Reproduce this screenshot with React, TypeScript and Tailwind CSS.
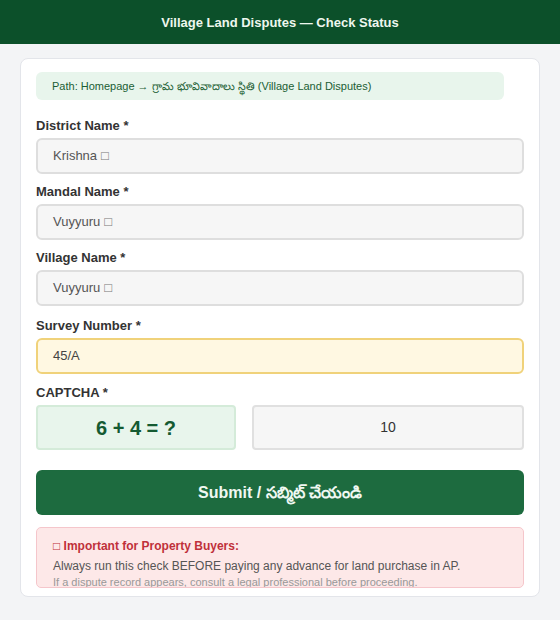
import React from "react";

const font = { fontFamily: '"Liberation Sans", Arial, sans-serif' };

function Label({ children }: { children: React.ReactNode }) {
  return <div className="text-[13px] font-bold text-[#333] leading-[14px] mb-[5px]">{children}</div>;
}

function Field({ label, value }: { label: string; value: string }) {
  return (
    <div className="flex flex-col">
      <Label>{label}</Label>
      <div className="h-[36px] rounded-[6px] border-2 border-[#dedede] bg-[#f6f6f6] px-[15px] flex items-center text-[13px] text-[#555]">
        {value} <span className="ml-[4px] text-[#777]">□</span>
      </div>
    </div>
  );
}

export default function App() {
  return (
    <div className="w-[560px] h-[620px] bg-[#f3f4f6] overflow-hidden" style={font}>
      <div className="h-[44px] bg-[#0c502a] flex items-center justify-center pt-[1px] text-[13px] font-bold text-[#eef7ee]">
        Village Land Disputes — Check Status
      </div>
      <div className="px-[20px] pt-[14px]">
        <div className="h-[539px] bg-white rounded-[8px] border border-[#e3e5ea] px-[15px] pt-[13px] overflow-hidden">
          <div className="w-[468px] h-[28px] rounded-[6px] bg-[#e8f5ec] pl-[16px] flex items-center text-[11px] text-[#1b5e34]">
            Path: Homepage → గ్రామ భూవివాదాలు స్థితి (Village Land Disputes)
          </div>
          <div className="mt-[19px] flex flex-col gap-[11px]">
            <Field label="District Name *" value="Krishna" />
            <Field label="Mandal Name *" value="Vuyyuru" />
            <Field label="Village Name *" value="Vuyyuru" />
          </div>
          <div className="mt-[13px] flex flex-col">
            <Label>Survey Number *</Label>
            <div className="h-[36px] rounded-[6px] border-2 border-[#f0d27a] bg-[#fff8e2] px-[15px] flex items-center text-[13px] text-[#444]">
              45/A
            </div>
          </div>
          <div className="mt-[12px] flex flex-col">
            <Label>CAPTCHA *</Label>
            <div className="flex gap-[16px]">
              <div className="w-[200px] h-[45px] rounded-[4px] border-2 border-[#d4ebd9] bg-[#e8f5ec] flex items-center justify-center text-[20px] font-bold text-[#145a32]">
                6 + 4 = ?
              </div>
              <div className="flex-1 h-[45px] rounded-[4px] border-2 border-[#e0e0e0] bg-[#f6f6f6] flex items-center justify-center text-[14px] text-[#333]">
                10
              </div>
            </div>
          </div>
          <div className="mt-[20px] h-[45px] rounded-[6px] bg-[#1d6b3f] flex items-center justify-center text-[16px] font-bold text-[#f0f8f2]">
            Submit / సబ్మిట్ చేయండి
          </div>
          <div className="mt-[12px] h-[61px] rounded-[5px] border border-[#f5c6cb] bg-[#fde8e8] px-[16px] pt-[11px] overflow-hidden">
            <div className="text-[12px] font-bold text-[#c0303a] leading-[14px]">□ Important for Property Buyers:</div>
            <div className="text-[12px] text-[#555] leading-[14px] mt-[6px]">
              Always run this check BEFORE paying any advance for land purchase in AP.
            </div>
            <div className="text-[11px] text-[#999] leading-[13px] mt-[3px]">
              If a dispute record appears, consult a legal professional before proceeding.
            </div>
          </div>
        </div>
      </div>
    </div>
  );
}
